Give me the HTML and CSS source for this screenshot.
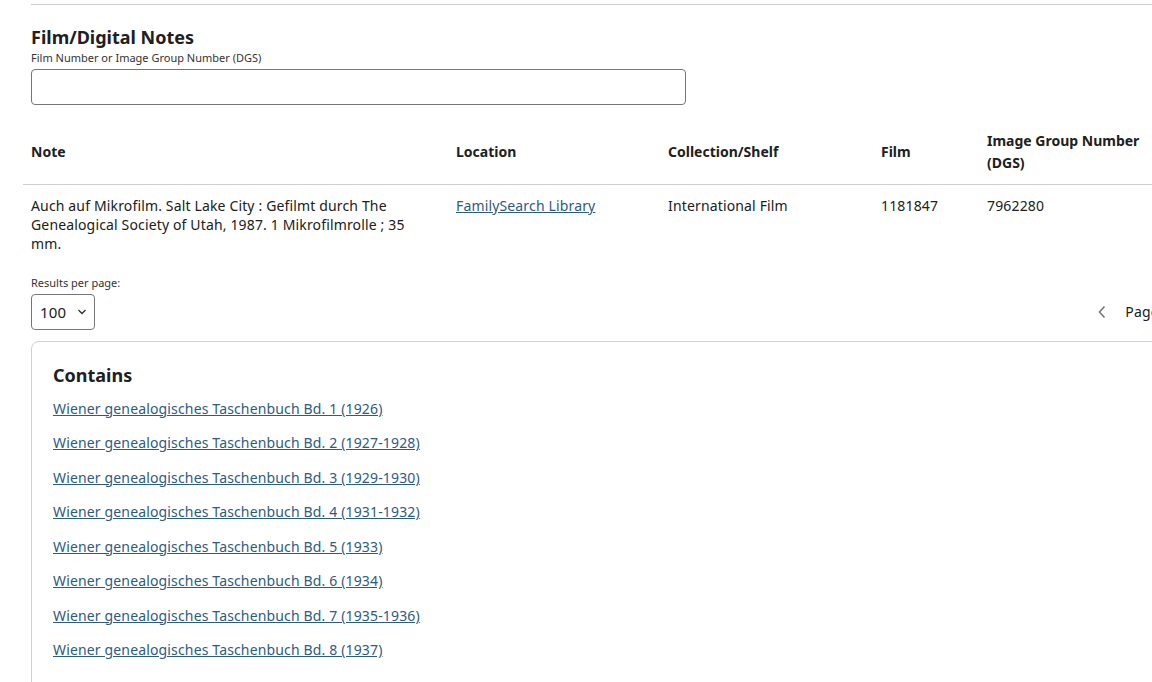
FILE: index.html
```html
<!DOCTYPE html>
<html lang="en">

<head>
    <meta charset="UTF-8">
    <title>Film/Digital Notes</title>
    <link rel="stylesheet" href="styles.css">
</head>

<body>

    <div class="page">
        <hr class="divider">

        <!-- Film notes -->
        <div class="film-notes">
            <h2>Film/Digital Notes</h2>
            <label class="field-label" for="filmSearch">Film Number or Image Group Number (DGS)</label>
            <input class="text-input" id="filmSearch" type="text">
        </div>

        <table class="notes-table">
            <thead>
                <tr>
                    <th class="col-note">Note</th>
                    <th class="col-location">Location</th>
                    <th class="col-collection">Collection/Shelf</th>
                    <th class="col-film">Film</th>
                    <th class="col-dgs">Image Group Number (DGS)</th>
                </tr>
            </thead>
            <tbody>
                <tr>
                    <td>Auch auf Mikrofilm. Salt Lake City : Gefilmt durch The Genealogical Society of Utah, 1987. 1 Mikrofilmrolle ; 35 mm.</td>
                    <td><a href="#">FamilySearch Library</a></td>
                    <td>International Film</td>
                    <td>1181847</td>
                    <td>7962280</td>
                </tr>
            </tbody>
        </table>

        <!-- Paging -->
        <div class="paging">
            <div class="per-page">
                <span class="field-label">Results per page:</span>
                <div class="select-box">
                    <span>100</span>
                    <svg width="10" height="6" viewBox="0 0 10 6"><path d="M1.5 1l3.5 3.5L8.5 1" fill="none" stroke="#333" stroke-width="1.4"/></svg>
                </div>
            </div>
            <div class="pager">
                <svg width="10" height="14" viewBox="0 0 10 14"><path d="M7.5 1.5L2.5 7l5 5.5" fill="none" stroke="#777" stroke-width="1.6"/></svg>
                <span>Page 1 of 1</span>
            </div>
        </div>

        <!-- Contains -->
        <div class="contains">
            <h2>Contains</h2>
            <ul class="contains-list">
                <li><a href="#">Wiener genealogisches Taschenbuch Bd. 1 (1926)</a></li>
                <li><a href="#">Wiener genealogisches Taschenbuch Bd. 2 (1927-1928)</a></li>
                <li><a href="#">Wiener genealogisches Taschenbuch Bd. 3 (1929-1930)</a></li>
                <li><a href="#">Wiener genealogisches Taschenbuch Bd. 4 (1931-1932)</a></li>
                <li><a href="#">Wiener genealogisches Taschenbuch Bd. 5 (1933)</a></li>
                <li><a href="#">Wiener genealogisches Taschenbuch Bd. 6 (1934)</a></li>
                <li><a href="#">Wiener genealogisches Taschenbuch Bd. 7 (1935-1936)</a></li>
                <li><a href="#">Wiener genealogisches Taschenbuch Bd. 8 (1937)</a></li>
            </ul>
        </div>
    </div>

</body>

</html>
```

FILE: styles.css
```css
* {
    margin: 0;
    padding: 0;
    box-sizing: border-box;
}

html {
    overflow: hidden;
}

body {
    font-family: "Noto Sans", "Open Sans", sans-serif;
    color: #202020;
    background-color: white;
    font-size: 14px;
    letter-spacing: 0.15px;
}

a {
    color: #2c5b85;
}

.page {
    width: 1250px;
    padding-left: 23px;
    padding-top: 4px;
}

.divider {
    border: none;
    border-top: 1px solid #d0d0d0;
    margin-left: 8px;
}

/* Film notes */
.film-notes {
    padding: 21px 8px 0;
}

.film-notes h2,
.contains h2 {
    font-size: 18px;
    font-weight: bold;
    line-height: 22px;
    letter-spacing: 0;
}

.field-label {
    display: block;
    font-size: 11px;
    line-height: 16px;
    letter-spacing: 0;
    color: #333;
}

.film-notes .field-label {
    margin-top: 2px;
}

.text-input {
    display: block;
    width: 655px;
    height: 36px;
    margin-top: 3px;
    border: 1px solid #767676;
    border-radius: 4px;
}

/* Table */
.notes-table {
    border-collapse: collapse;
    margin-top: 14px;
    width: 1136px;
    table-layout: fixed;
}

.notes-table th {
    text-align: left;
    font-weight: bold;
    letter-spacing: 0;
    line-height: 22px;
    padding: 11px 8px 9px;
    height: 65px;
    vertical-align: middle;
    border-bottom: 1px solid #cfcfcf;
}

.notes-table td {
    line-height: 19px;
    padding: 11px 16px 10px 8px;
    vertical-align: top;
}

.col-note { width: 425px; }
.col-location { width: 212px; }
.col-collection { width: 213px; }
.col-film { width: 106px; }
.col-dgs { width: 180px; }

/* Paging */
.paging {
    display: flex;
    justify-content: space-between;
    align-items: flex-end;
    padding: 12px 8px 0;
    width: 1200px;
}

.select-box {
    display: flex;
    align-items: center;
    gap: 11px;
    width: 64px;
    height: 36px;
    margin-top: 3px;
    padding-left: 8px;
    border: 1px solid #767676;
    border-radius: 4px;
    font-size: 15px;
}

.pager {
    display: flex;
    align-items: center;
    gap: 18px;
    height: 36px;
    margin-right: 15px;
}

/* Contains */
.contains {
    margin: 11px 0 0 8px;
    border: 1px solid #d0d0d0;
    border-radius: 8px;
    padding: 22px 21px;
    height: 400px;
}

.contains h2 {
    margin-bottom: 13px;
}

.contains-list {
    list-style: none;
}

.contains-list li {
    line-height: 19px;
    margin-bottom: 15.5px;
}
```
